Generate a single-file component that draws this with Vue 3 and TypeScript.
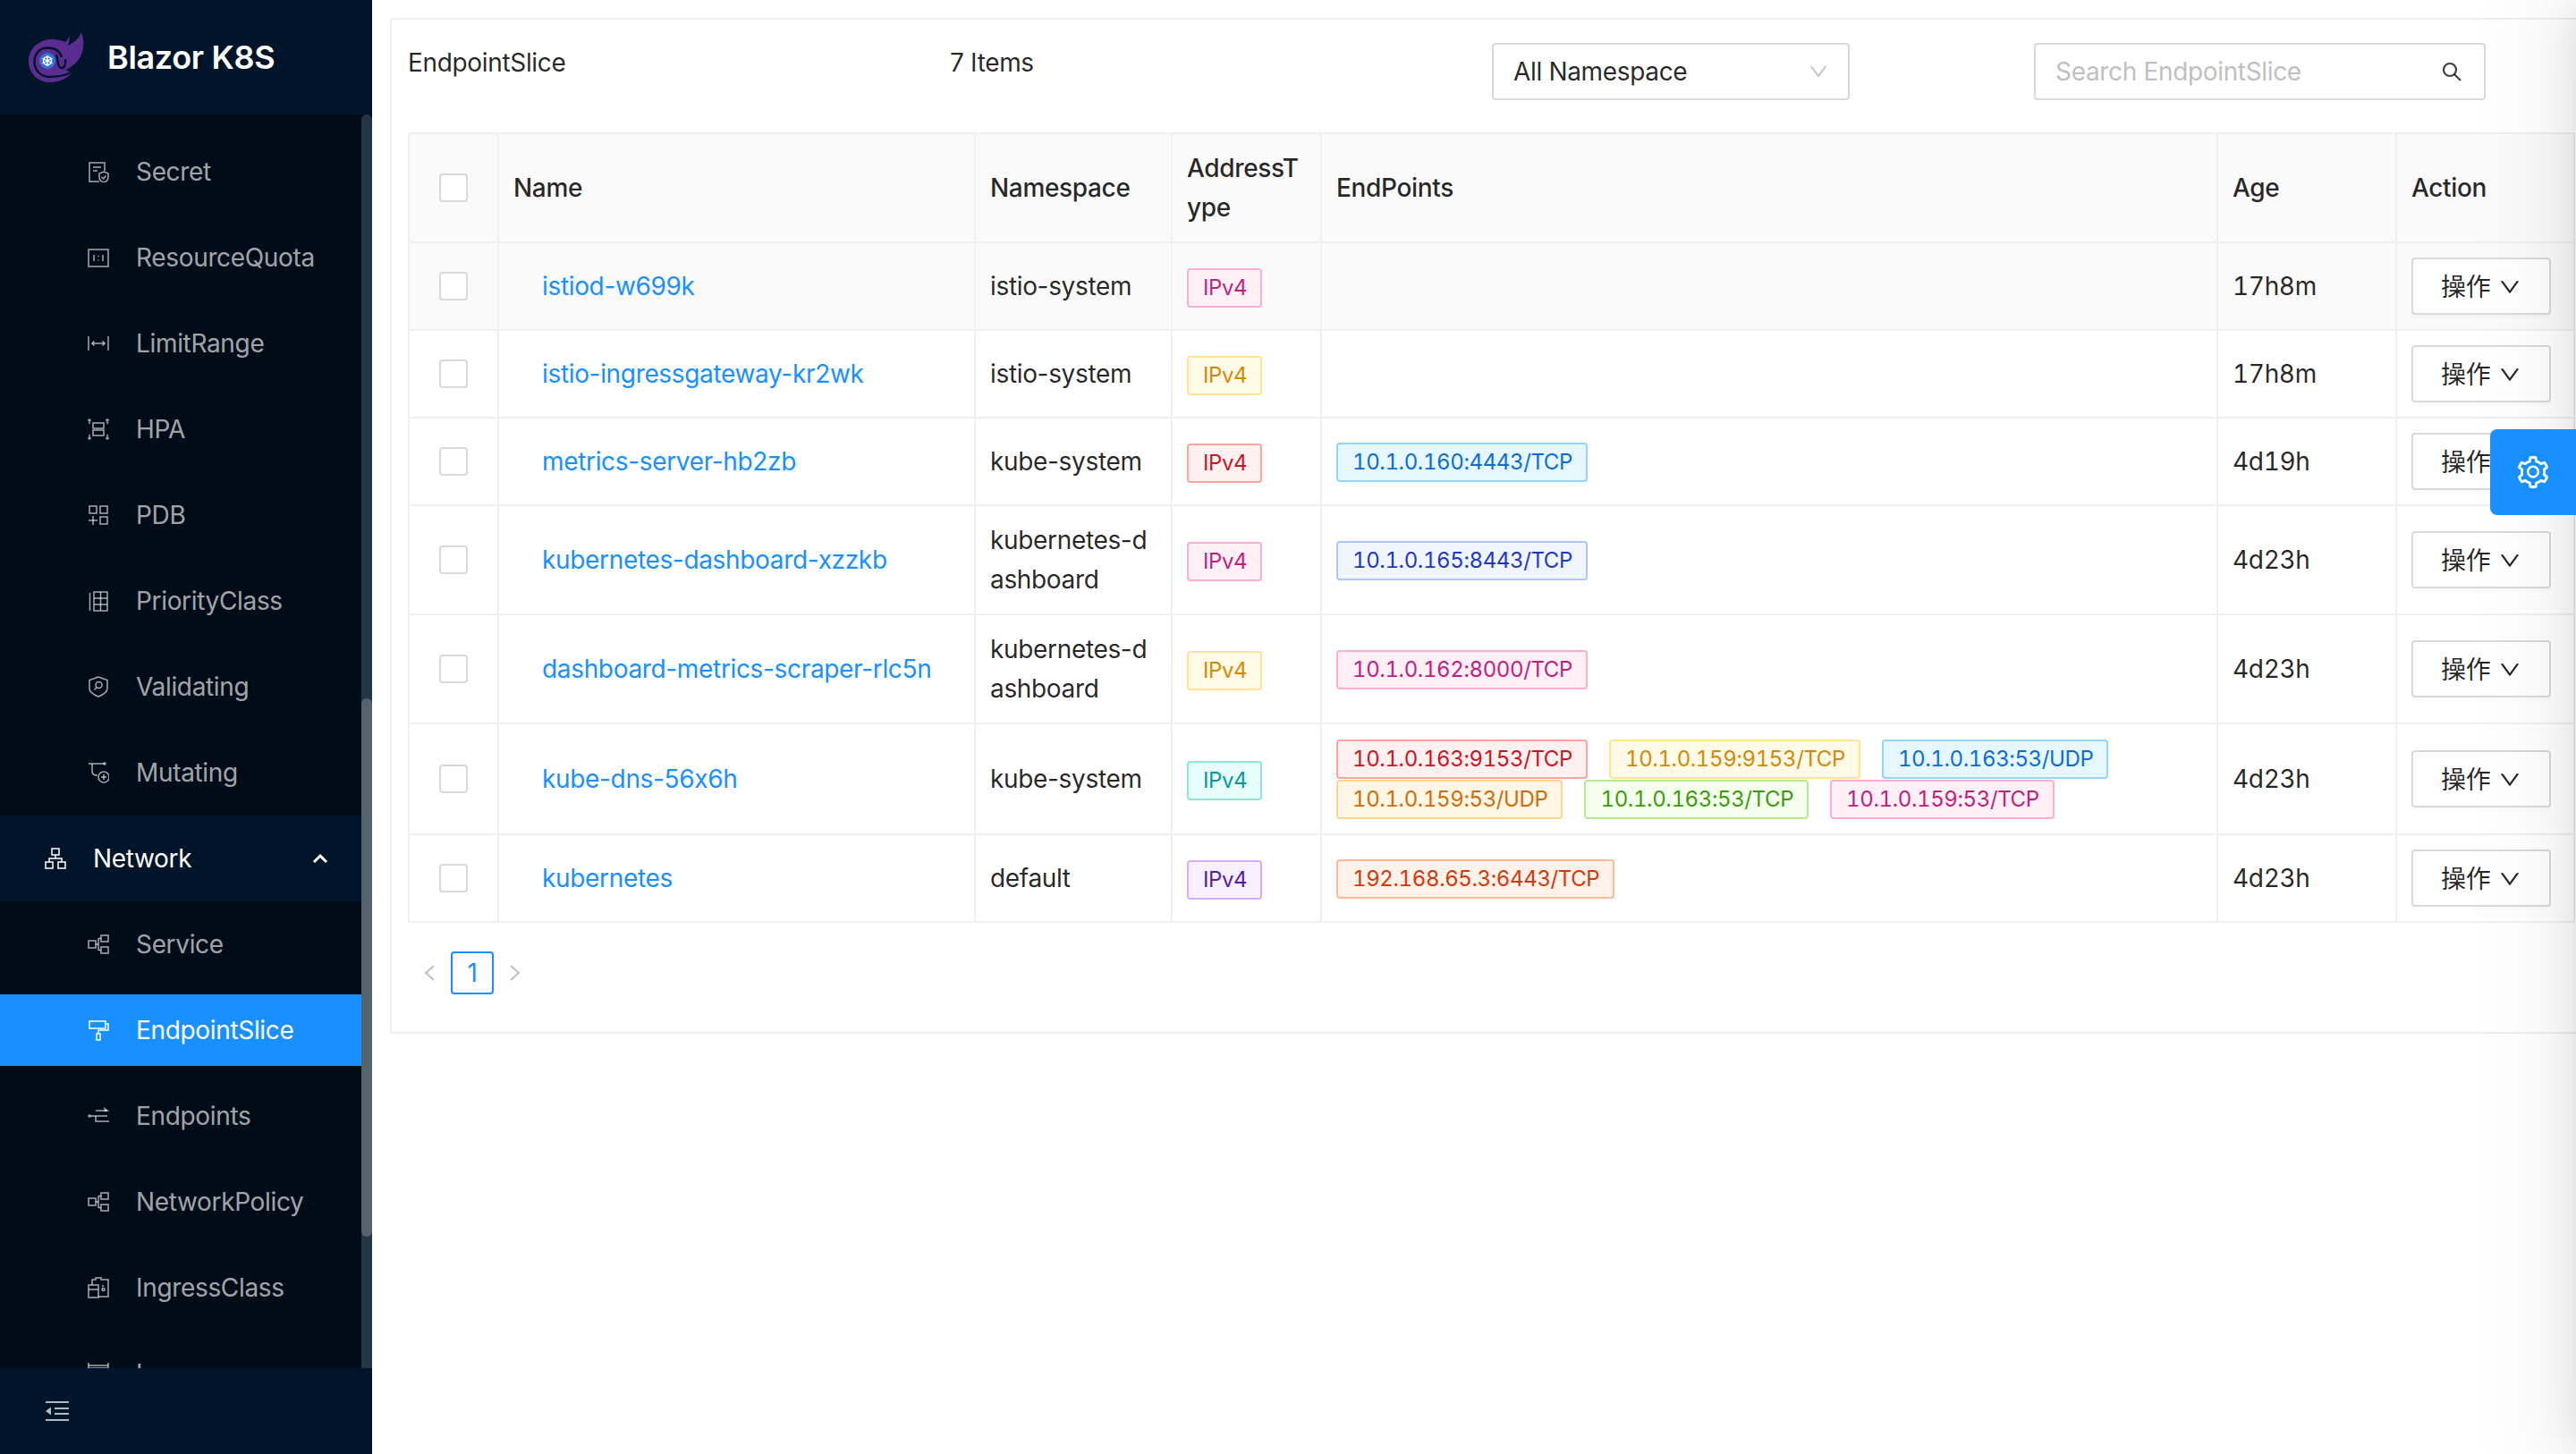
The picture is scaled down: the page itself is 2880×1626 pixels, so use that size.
<template>
  <div class="layout">
    <aside class="sider">
      <div class="brand">
        <svg class="logo" viewBox="0 0 62 56">
          <path class="flame" d="M59 0C64 14 61 30 48 38C46 40 44 41 41 42C44 43 46 44 48 46C40 54 32 56 24 56C10 56 0 46 0 32C0 18 12 8 26 8C32 8 38 10 41 11C43 9 45 6 46 4C46 8 45 12 44 15C50 12 56 8 59 0Z" />
          <path class="swirl" d="M37 28C35 21 29 17.5 21 17.5C12 17.5 6.5 24 6.5 33C6.5 43 14 50 23 50C31 50 40 49 47 45" />
          <path class="swirl" d="M31 25C33 30 32 39 36 40C40 41 42 36 41 30" />
          <circle class="wheel" cx="21" cy="32" r="9" />
          <circle class="spoke" cx="21" cy="32" r="4.5" />
          <path class="spoke" d="M21 26V38M15.5 29L26.5 35M26.5 29L15.5 35" />
        </svg>
        <span class="brand-name">Blazor K8S</span>
      </div>
      <div class="menu-wrap">
        <ul class="menu">
          <li
            v-for="item in menu"
            :key="item.name"
            class="menu-item"
            :class="{ group: item.group, active: item.name === 'EndpointSlice' }"
          >
            <svg class="menu-icon" viewBox="0 0 24 24">
              <path v-for="d in icons[item.icon]" :key="d" :d="d" />
            </svg>
            <span>{{ item.name }}</span>
            <svg v-if="item.group" class="menu-arrow" viewBox="0 0 18 12">
              <path d="M2 10L9 3L16 10" />
            </svg>
          </li>
        </ul>
        <div class="scroll-track"><div class="scroll-thumb"></div></div>
      </div>
      <div class="trigger">
        <svg viewBox="0 0 26 22">
          <path d="M0 1H26M10 8H26M10 14H26M0 21H26" />
          <path class="solid" d="M6 6.5V15.5L0 11Z" />
        </svg>
      </div>
    </aside>

    <main class="content">
      <section class="card">
        <div class="toolbar">
          <div>EndpointSlice</div>
          <div>7 Items</div>
          <div class="select">
            <span>All Namespace</span>
            <svg class="chevron grey" viewBox="64 64 896 896"><path :d="downPath" /></svg>
          </div>
          <div class="search">
            <span>Search EndpointSlice</span>
            <svg viewBox="0 0 24 24"><circle cx="10" cy="10" r="7" /><path d="M15 15L22 22" /></svg>
          </div>
        </div>

        <table class="table">
          <colgroup>
            <col style="width: 100px" />
            <col style="width: 533px" />
            <col style="width: 220px" />
            <col style="width: 167px" />
            <col style="width: 1002px" />
            <col style="width: 200px" />
            <col style="width: 199px" />
          </colgroup>
          <thead>
            <tr>
              <th class="check"><span class="checkbox"></span></th>
              <th>Name</th>
              <th>Namespace</th>
              <th>AddressType</th>
              <th>EndPoints</th>
              <th>Age</th>
              <th>Action</th>
            </tr>
          </thead>
          <tbody>
            <tr v-for="(row, i) in rows" :key="row.name" :class="{ hovered: i === 0 }">
              <td class="check"><span class="checkbox"></span></td>
              <td><a class="link">{{ row.name }}</a></td>
              <td>{{ row.ns }}</td>
              <td><span class="tag type-tag" :class="row.type">IPv4</span></td>
              <td>
                <div v-if="row.ends.length" class="tags" :class="{ many: row.ends.length > 3 }">
                  <span v-for="e in row.ends" :key="e.text" class="tag" :class="e.color">{{ e.text }}</span>
                </div>
              </td>
              <td class="age">{{ row.age }}</td>
              <td>
                <button class="action">
                  操作
                  <svg class="chevron" viewBox="64 64 896 896"><path :d="downPath" /></svg>
                </button>
              </td>
            </tr>
          </tbody>
        </table>

        <div class="pager">
          <svg viewBox="0 0 12 18"><path d="M11 1L2 9L11 17" /></svg>
          <span class="page">1</span>
          <svg viewBox="0 0 12 18"><path d="M1 1L10 9L1 17" /></svg>
        </div>
      </section>
    </main>

    <div class="drawer">
      <div class="drawer-handle">
        <svg viewBox="64 64 896 896"><path :d="gearPath" /></svg>
      </div>
    </div>
  </div>
</template>

<script setup lang="ts">
interface Endpoint {
  text: string;
  color: string;
}

const downPath =
  "M884 256h-75c-5.1 0-9.9 2.5-12.9 6.6L512 654.2 227.9 262.6c-3-4.1-7.8-6.6-12.9-6.6h-75c-6.5 0-10.3 7.4-6.5 12.7l352.6 486.1c12.8 17.6 39 17.6 51.7 0l352.6-486.1c3.9-5.3.1-12.7-6.4-12.7z";

const gearPath =
  "M924.8 625.7l-65.5-56c3.1-19 4.7-38.4 4.7-57.8s-1.6-38.8-4.7-57.8l65.5-56a32.03 32.03 0 0 0 9.3-35.2l-.9-2.6a443.74 443.74 0 0 0-79.7-137.9l-1.8-2.1a32.12 32.12 0 0 0-35.1-9.5l-81.3 28.9c-30-24.6-63.5-44-99.7-57.6l-15.7-85a32.05 32.05 0 0 0-25.8-25.7l-2.7-.5c-52.1-9.4-106.9-9.4-159 0l-2.7.5a32.05 32.05 0 0 0-25.8 25.7l-15.8 85.4a351.86 351.86 0 0 0-99 57.4l-81.9-29.1a32 32 0 0 0-35.1 9.5l-1.8 2.1a446.02 446.02 0 0 0-79.7 137.9l-.9 2.6c-4.5 12.5-.8 26.5 9.3 35.2l66.3 56.6c-3.1 18.8-4.6 38-4.6 57.1 0 19.2 1.5 38.4 4.6 57.1L99 625.5a32.03 32.03 0 0 0-9.3 35.2l.9 2.6c18.1 50.4 44.9 96.9 79.7 137.9l1.8 2.1a32.12 32.12 0 0 0 35.1 9.5l81.9-29.1c29.8 24.5 63.1 43.9 99 57.4l15.8 85.4a32.05 32.05 0 0 0 25.8 25.7l2.7.5a449.4 449.4 0 0 0 159 0l2.7-.5a32.05 32.05 0 0 0 25.8-25.7l15.7-85a350 350 0 0 0 99.7-57.6l81.3 28.9a32 32 0 0 0 35.1-9.5l1.8-2.1c34.8-41.1 61.6-87.5 79.7-137.9l.9-2.6c4.5-12.3.8-26.3-9.3-35zM788.3 465.9c2.5 15.1 3.8 30.6 3.8 46.1s-1.3 31-3.8 46.1l-6.6 40.1 74.7 63.9a370.03 370.03 0 0 1-42.6 73.6L721 702.8l-31.4 25.8c-23.9 19.6-50.5 35-79.3 45.8l-38.1 14.3-17.9 97a377.5 377.5 0 0 1-85 0l-17.9-97.2-37.8-14.5c-28.5-10.8-55-26.2-78.7-45.7l-31.4-25.9-93.4 33.2c-17-22.9-31.2-47.6-42.6-73.6l75.5-64.5-6.5-40c-2.4-14.9-3.7-30.3-3.7-45.5 0-15.3 1.2-30.6 3.7-45.5l6.5-40-75.5-64.5c11.3-26.1 25.6-50.7 42.6-73.6l93.4 33.2 31.4-25.9c23.7-19.5 50.2-34.9 78.7-45.7l37.9-14.3 17.9-97.2c28.1-3.2 56.8-3.2 85 0l17.9 97 38.1 14.3c28.7 10.8 55.4 26.2 79.3 45.8l31.4 25.8 92.8-32.9c17 22.9 31.2 47.6 42.6 73.6L781.8 426l6.5 39.9zM512 326c-97.2 0-176 78.8-176 176s78.8 176 176 176 176-78.8 176-176-78.8-176-176-176zm79.2 255.2A111.6 111.6 0 0 1 512 614c-29.9 0-58-11.7-79.2-32.8A111.6 111.6 0 0 1 400 502c0-29.9 11.7-58 32.8-79.2C454 401.6 482.1 390 512 390c29.9 0 58 11.6 79.2 32.8A111.6 111.6 0 0 1 624 502c0 29.9-11.7 58-32.8 79.2z";

// stroke paths in a 24x24 box
const icons: Record<string, string[]> = {
  secret: ["M19 11V2H2V23H13", "M6 7H15", "M6 11H11", "M18 12L23 14V18C23 21 21 23 18 24C15 23 13 21 13 18V14Z", "M15.5 18L17.5 20L20.5 16.5"],
  quota: ["M1 3H23V22H1Z", "M7 9V16", "M17 9V16", "M12 10V11", "M12 14.5V15.5"],
  limit: ["M1 4V20", "M23 4V20", "M5 12H19", "M7.5 9.5L5 12L7.5 14.5", "M16.5 9.5L19 12L16.5 14.5"],
  hpa: ["M6 5H18V11H6Z", "M6 13H18V19H6Z", "M3 2A1 1 0 1 0 1 2A1 1 0 0 0 3 2", "M23 2A1 1 0 1 0 21 2A1 1 0 0 0 23 2", "M3 22A1 1 0 1 0 1 22A1 1 0 0 0 3 22", "M23 22A1 1 0 1 0 21 22A1 1 0 0 0 23 22", "M2 4V6", "M22 4V6", "M2 18V20", "M22 18V20"],
  pdb: ["M2 2H10V10H2Z", "M14 2H22V10H14Z", "M14 14H22V22H14Z", "M1 18H11", "M6 13V23"],
  priority: ["M2.5 3V23", "M7 2H22V23H7Z", "M7 9H22", "M7 16H22", "M14.5 2V23"],
  validating: ["M12 1L22 4.5V14C22 18 17 21 12 23C7 21 2 18 2 14V4.5Z", "M16 10A3.5 3.5 0 1 0 9 10A3.5 3.5 0 0 0 16 10", "M10 13L7.5 15.5"],
  mutating: ["M1 2H19", "M5 2V10C5 13 7 15 10 15H11", "M24 17A6 6 0 1 0 12 17A6 6 0 0 0 24 17", "M18 14V20", "M15 17H21", "M20 2A1 1 0 1 0 18 2A1 1 0 0 0 20 2"],
  network: ["M8 1H16V8H8Z", "M1 16H9V23H1Z", "M15 16H23V23H15Z", "M12 8V12", "M5 16V12H19V16"],
  partition: ["M1 8H9V16H1Z", "M15 2H23V9H15Z", "M15 15H23V22H15Z", "M9 12H12", "M12 5.5V18.5", "M12 5.5H15", "M12 18.5H15"],
  roller: ["M2 2H20V10H2Z", "M20 5H23V12H12V16", "M10 16H14V23H10Z"],
  endpoints: ["M3 12A1 1 0 1 0 1 12A1 1 0 0 0 3 12", "M3 12H22", "M9 6H22", "M18 3L22 6L18 6", "M9 12V18H24"],
  ingressClass: ["M1 9H12V23H1Z", "M1 14H12", "M5 9V3H9V1H15V3H23V22H12", "M16 10H18", "M16 14A1.5 1.5 0 1 0 19 14A1.5 1.5 0 0 0 16 14"],
  ingress: ["M1 0V6H23V0", "M1 3H23"],
};

const menu = [
  { name: "Secret", icon: "secret" },
  { name: "ResourceQuota", icon: "quota" },
  { name: "LimitRange", icon: "limit" },
  { name: "HPA", icon: "hpa" },
  { name: "PDB", icon: "pdb" },
  { name: "PriorityClass", icon: "priority" },
  { name: "Validating", icon: "validating" },
  { name: "Mutating", icon: "mutating" },
  { name: "Network", icon: "network", group: true },
  { name: "Service", icon: "partition" },
  { name: "EndpointSlice", icon: "roller" },
  { name: "Endpoints", icon: "endpoints" },
  { name: "NetworkPolicy", icon: "partition" },
  { name: "IngressClass", icon: "ingressClass" },
  { name: "Ingress", icon: "ingress" },
];

const ep = (text: string, color: string): Endpoint => ({ text, color });

const rows: { name: string; ns: string; type: string; ends: Endpoint[]; age: string }[] = [
  { name: "istiod-w699k", ns: "istio-system", type: "magenta", ends: [], age: "17h8m" },
  { name: "istio-ingressgateway-kr2wk", ns: "istio-system", type: "gold", ends: [], age: "17h8m" },
  { name: "metrics-server-hb2zb", ns: "kube-system", type: "red", ends: [ep("10.1.0.160:4443/TCP", "blue")], age: "4d19h" },
  { name: "kubernetes-dashboard-xzzkb", ns: "kubernetes-dashboard", type: "magenta", ends: [ep("10.1.0.165:8443/TCP", "geekblue")], age: "4d23h" },
  { name: "dashboard-metrics-scraper-rlc5n", ns: "kubernetes-dashboard", type: "gold", ends: [ep("10.1.0.162:8000/TCP", "magenta")], age: "4d23h" },
  {
    name: "kube-dns-56x6h",
    ns: "kube-system",
    type: "cyan",
    ends: [
      ep("10.1.0.163:9153/TCP", "red"),
      ep("10.1.0.159:9153/TCP", "gold"),
      ep("10.1.0.163:53/UDP", "blue"),
      ep("10.1.0.159:53/UDP", "orange"),
      ep("10.1.0.163:53/TCP", "green"),
      ep("10.1.0.159:53/TCP", "magenta"),
    ],
    age: "4d23h",
  },
  { name: "kubernetes", ns: "default", type: "purple", ends: [ep("192.168.65.3:6443/TCP", "volcano")], age: "4d23h" },
];
</script>

<style>
html,
body {
  margin: 0;
  background: #fff;
}
</style>

<style scoped>
.layout {
  position: relative;
  display: flex;
  width: 2880px;
  height: 1626px;
  overflow: hidden;
  font-family: Inter, "Noto Sans CJK SC", sans-serif;
  font-size: 28px;
  line-height: 44px;
  letter-spacing: -0.012em;
  font-feature-settings: "calt" 0;
  color: rgba(0, 0, 0, 0.85);
}

/* sider */
.sider {
  flex: none;
  display: flex;
  flex-direction: column;
  width: 416px;
  background: #001529;
}
.brand {
  flex: none;
  display: flex;
  align-items: center;
  height: 128px;
  padding-left: 32px;
  box-sizing: border-box;
}
.logo {
  width: 62px;
  height: 56px;
  margin-right: 26px;
}
.flame {
  fill: #5b2d91;
}
.swirl {
  fill: none;
  stroke: #001529;
  stroke-width: 2.4;
}
.wheel {
  fill: #2f74d8;
}
.spoke {
  fill: none;
  stroke: #fff;
  stroke-width: 1.4;
}
.brand-name {
  font-size: 36px;
  font-weight: 600;
  color: #fff;
}
.menu-wrap {
  flex: 1;
  display: flex;
  min-height: 0;
  background: #000c17;
}
.menu {
  flex: 1;
  margin: 0;
  padding: 24px 0 0;
  list-style: none;
  overflow: hidden;
}
.menu-item {
  display: flex;
  align-items: center;
  height: 80px;
  margin-bottom: 16px;
  padding-left: 98px;
  color: rgba(255, 255, 255, 0.65);
}
.menu-item.group {
  height: 96px;
  margin: -8px 0 8px;
  padding-left: 50px;
  background: #001529;
  color: #fff;
}
.menu-item.active {
  background: #1890ff;
  color: #fff;
}
.menu-icon {
  flex: none;
  width: 24px;
  height: 24px;
  margin-right: 30px;
  fill: none;
  stroke: currentColor;
  stroke-width: 1.5;
}
.menu-arrow {
  width: 18px;
  height: 12px;
  margin-left: auto;
  margin-right: 37px;
  fill: none;
  stroke: #fff;
  stroke-width: 3;
}
.scroll-track {
  flex: none;
  position: relative;
  width: 12px;
  border-radius: 6px 6px 0 0;
  background: #243645;
}
.scroll-thumb {
  position: absolute;
  top: 653px;
  left: 0;
  width: 12px;
  height: 602px;
  border-radius: 6px;
  background: #55636f;
}
.trigger {
  flex: none;
  display: flex;
  align-items: center;
  height: 96px;
  padding-left: 51px;
  box-sizing: border-box;
}
.trigger svg {
  width: 26px;
  height: 22px;
  fill: none;
  stroke: rgba(255, 255, 255, 0.7);
  stroke-width: 2;
}
.trigger .solid {
  fill: rgba(255, 255, 255, 0.7);
  stroke: none;
}

/* content */
.content {
  flex: 1;
  min-width: 0;
  padding: 20px 0 0 20px;
}
.card {
  box-sizing: border-box;
  width: 2460px;
  height: 1136px;
  padding: 26px 18px 0;
  border: 2px solid #f0f0f0;
  background: #fff;
}
.toolbar {
  display: grid;
  grid-template-columns: repeat(4, 606px);
  height: 100px;
}
.select,
.search {
  display: flex;
  align-items: center;
  justify-content: space-between;
  box-sizing: border-box;
  height: 64px;
  border: 2px solid #d9d9d9;
  border-radius: 4px;
  padding: 0 22px;
}
.select {
  width: 400px;
}
.search {
  width: 505px;
  padding-right: 24px;
  color: #bfbfbf;
}
.search svg {
  width: 24px;
  height: 24px;
  fill: none;
  stroke: rgba(0, 0, 0, 0.75);
  stroke-width: 2.2;
}
.chevron {
  width: 24px;
  height: 24px;
  fill: rgba(0, 0, 0, 0.85);
}
.chevron.grey {
  width: 22px;
  height: 22px;
  fill: #c4c4c4;
}

/* table */
.table {
  table-layout: fixed;
  border-collapse: separate;
  border-spacing: 0;
  width: 2423px;
  border-top: 2px solid #f0f0f0;
  border-left: 2px solid #f0f0f0;
  border-radius: 4px 4px 0 0;
}
.table th,
.table td {
  box-sizing: border-box;
  padding: 16px;
  border-right: 2px solid #f0f0f0;
  border-bottom: 2px solid #f0f0f0;
  text-align: left;
  word-break: break-all;
  vertical-align: middle;
}
.table th {
  font-weight: 500;
  background: #fafafa;
}
.table .check {
  text-align: center;
  padding: 0;
}
.table .age {
  font-feature-settings: "calt" 0, "tnum" 1;
}
.hovered td {
  background: #fafafa;
}
.checkbox {
  display: block;
  box-sizing: border-box;
  width: 32px;
  height: 32px;
  margin: 0 auto;
  border: 2px solid #d9d9d9;
  border-radius: 4px;
  background: #fff;
}
.link {
  margin-left: 32px;
  color: #1890ff;
}
.tags {
  display: flex;
  flex-wrap: wrap;
  column-gap: 24px;
  row-gap: 1px;
  margin-top: 1px;
}
.tags.many {
  min-height: 89px;
  align-content: flex-start;
}
.tag {
  display: inline-block;
  box-sizing: border-box;
  height: 44px;
  padding: 0 15px 0 16px;
  border: 2px solid;
  border-radius: 4px;
  font-size: 24px;
  line-height: 40px;
  letter-spacing: -0.016em;
  font-feature-settings: "calt" 0, "tnum" 1;
  vertical-align: middle;
  word-break: keep-all;
}
.type-tag {
  margin-top: 2px;
}
.red { color: #cf1322; background: #fff1f0; border-color: #ffa39e; }
.gold { color: #d48806; background: #fffbe6; border-color: #ffe58f; }
.blue { color: #096dd9; background: #e6f7ff; border-color: #91d5ff; }
.orange { color: #d46b08; background: #fff7e6; border-color: #ffd591; }
.green { color: #389e0d; background: #f6ffed; border-color: #b7eb8f; }
.magenta { color: #c41d7f; background: #fff0f6; border-color: #ffadd2; }
.cyan { color: #08979c; background: #e6fffb; border-color: #87e8de; }
.purple { color: #531dab; background: #f9f0ff; border-color: #d3adf7; }
.volcano { color: #d4380d; background: #fff2e8; border-color: #ffbb96; }
.geekblue { color: #1d39c4; background: #f0f5ff; border-color: #adc6ff; }

.action {
  display: flex;
  align-items: center;
  gap: 10px;
  box-sizing: border-box;
  width: 156px;
  height: 64px;
  padding: 2px 0 0 31px;
  border: 2px solid #d9d9d9;
  border-radius: 4px;
  background: #fff;
  box-shadow: 0 4px 0 rgba(0, 0, 0, 0.015);
  font: inherit;
  letter-spacing: inherit;
  color: inherit;
}

/* pager */
.pager {
  display: flex;
  align-items: center;
  gap: 18px;
  margin-top: 32px;
  padding-left: 18px;
}
.pager svg {
  width: 12px;
  height: 18px;
  fill: none;
  stroke: #bfbfbf;
  stroke-width: 2;
}
.page {
  box-sizing: border-box;
  width: 48px;
  height: 48px;
  border: 2px solid #1890ff;
  border-radius: 4px;
  color: #1890ff;
  line-height: 44px;
  text-align: center;
}

/* closed drawer sitting just off the right edge, only its shadow and handle show */
.drawer {
  position: absolute;
  top: 0;
  bottom: 0;
  left: 2880px;
  width: 200px;
  background: #fff;
  box-shadow: -12px 0 32px -16px rgba(0, 0, 0, 0.08), -18px 0 56px 0 rgba(0, 0, 0, 0.05), -24px 0 96px 32px rgba(0, 0, 0, 0.03);
}
.drawer-handle {
  position: absolute;
  top: 480px;
  left: -96px;
  display: flex;
  align-items: center;
  justify-content: center;
  width: 96px;
  height: 96px;
  border-radius: 8px 0 0 8px;
  background: #1890ff;
}
.drawer-handle svg {
  width: 36px;
  height: 36px;
  fill: #fff;
}
</style>
